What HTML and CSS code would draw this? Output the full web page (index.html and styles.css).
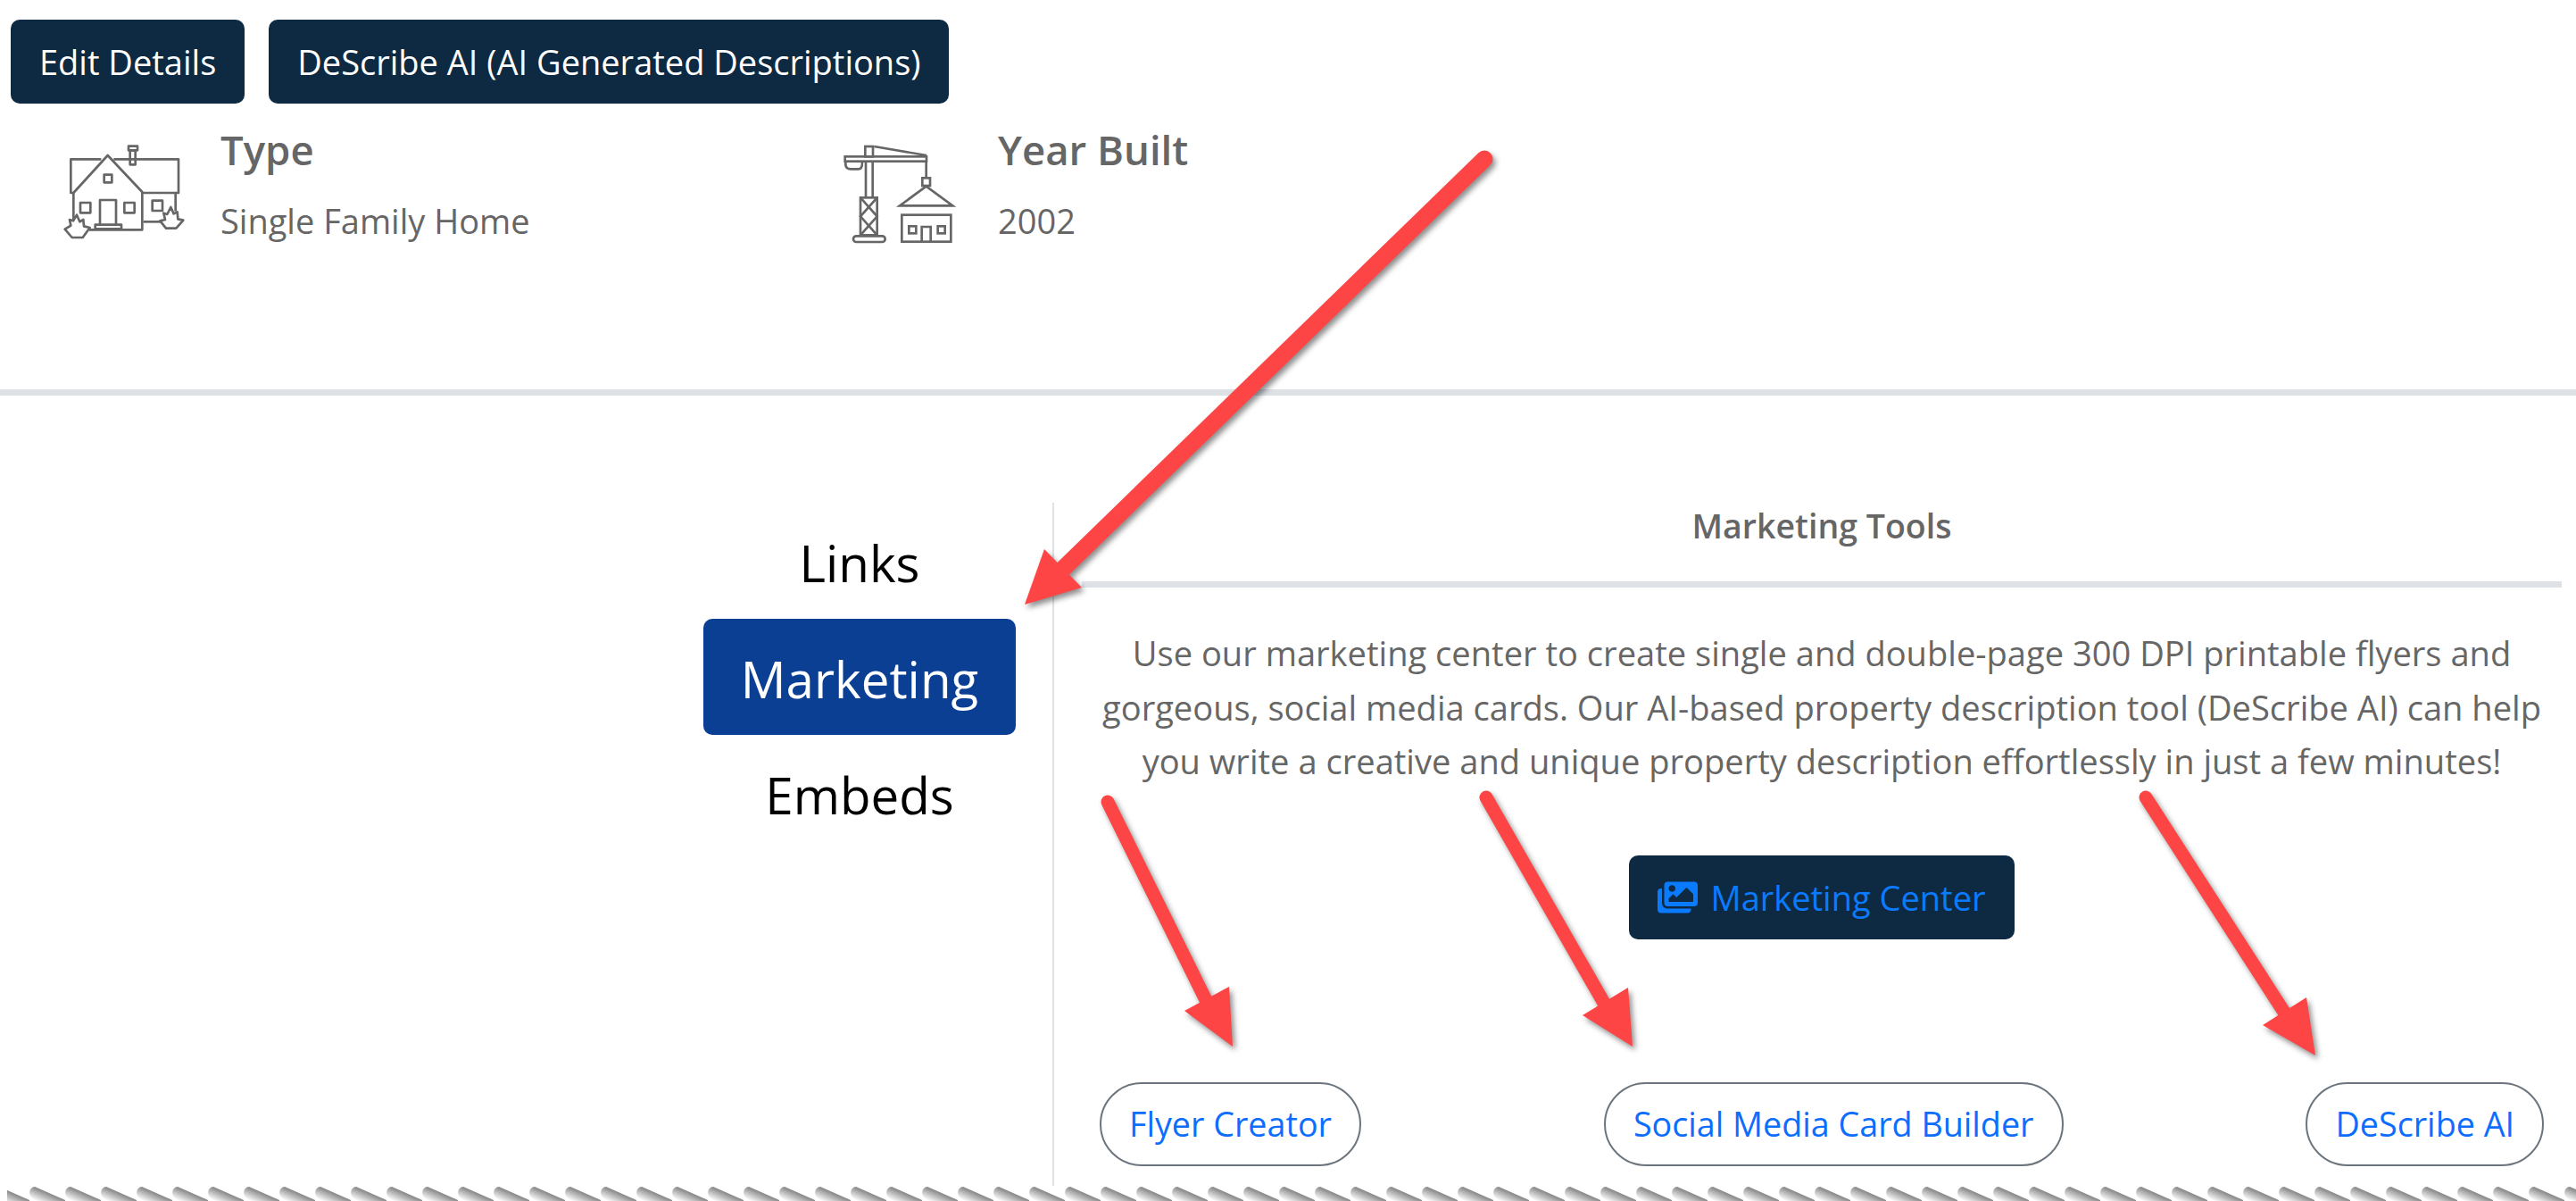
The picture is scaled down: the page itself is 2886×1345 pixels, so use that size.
FILE: index.html
```html
<!doctype html>
<html>
<head>
<meta charset="utf-8">
<title>Listing details</title>
<link rel="stylesheet" href="styles.css">
</head>

<body>
<div class="page">
    <div class="actions">
        <a class="btn">Edit Details</a>
        <a class="btn">DeScribe AI (AI Generated Descriptions)</a>
    </div>

    <div class="facts">
        <div class="fact">
            <svg class="fact-icon house" viewBox="0 0 540 420">
                <g fill="none" stroke="#666" stroke-width="8" stroke-linejoin="round">
                    <path d="M97 228 L88 228 V115 H190"/>
                    <path d="M232 115 H450 V228 H330"/>
                    <path d="M97 228 L212 102 L328 225 V352 H150"/>
                    <path d="M97 228 V330"/>
                    <path d="M440 228 V290"/>
                    <path d="M332 325 H395"/>
                    <path d="M287 133 V85 H305 V133 Z"/>
                    <rect x="282" y="71" width="30" height="14"/>
                    <rect x="200" y="167" width="26" height="26"/>
                    <rect x="120" y="261" width="34" height="34"/>
                    <rect x="268" y="261" width="34" height="34"/>
                    <rect x="362" y="254" width="34" height="34"/>
                    <path d="M186 335 V252 H240 V335"/>
                    <rect x="170" y="335" width="88" height="14"/>
                    <path fill="#fff" d="M68 350 L88 338 L84 318 L96 322 L108 302 L118 325 L130 318 L132 340 L152 345 L128 378 H92 Z"/>
                    <path fill="#fff" d="M388 322 L405 318 L400 296 L412 300 L424 276 L434 298 L446 292 L448 316 L466 320 L442 347 H408 Z"/>
                </g>
            </svg>
            <div>
                <div class="fact-label">Type</div>
                <div class="fact-value">Single Family Home</div>
            </div>
        </div>
        <div class="fact">
            <svg class="fact-icon crane" viewBox="0 0 513 420">
                <g fill="none" stroke="#666" stroke-width="8">
                    <rect x="50" y="76" width="274" height="16"/>
                    <path d="M52 95 C50 115 60 118 70 118 H95 C105 118 108 105 108 95"/>
                    <rect x="118" y="42" width="26" height="34"/>
                    <path d="M148 42 L324 72"/>
                    <path d="M120 92 V214"/>
                    <path d="M143 92 V214"/>
                    <rect x="102" y="214" width="56" height="126"/>
                    <path d="M102 214 L158 277 L102 340"/>
                    <path d="M158 214 L102 277 L158 340"/>
                    <rect x="78" y="343" width="107" height="20" rx="10"/>
                    <path d="M323 92 V148"/>
                    <rect x="310" y="148" width="26" height="26"/>
                    <path d="M323 176 L234 241 H412 Z"/>
                    <rect x="241" y="272" width="165" height="90"/>
                    <rect x="265" y="310" width="24" height="24"/>
                    <rect x="362" y="310" width="24" height="24"/>
                    <path d="M308 360 V312 H338 V360"/>
                </g>
            </svg>
            <div>
                <div class="fact-label">Year Built</div>
                <div class="fact-value">2002</div>
            </div>
        </div>
    </div>

    <div class="rule"></div>

    <div class="tools">
        <div class="tabs">
            <div class="tab">Links</div>
            <div class="tab active">Marketing</div>
            <div class="tab">Embeds</div>
        </div>
        <div class="panel">
            <div class="panel-title">Marketing Tools</div>
            <div class="panel-rule"></div>
            <p class="panel-text">Use our marketing center to create single and double-page 300 DPI printable flyers and gorgeous, social media cards. Our AI-based property description tool (DeScribe AI) can help you write a creative and unique property description effortlessly in just a few minutes!</p>
            <div class="center-row">
                <a class="btn btn-blue">
                    <svg class="btn-icon" viewBox="0 0 576 512"><path fill="#0a7bff" d="M480 416v16c0 26.51-21.49 48-48 48H48c-26.51 0-48-21.49-48-48V176c0-26.51 21.49-48 48-48h16v208c0 44.112 35.888 80 80 80h336zm96-80V80c0-26.51-21.49-48-48-48H144c-26.51 0-48 21.49-48 48v256c0 26.51 21.49 48 48 48h384c26.51 0 48-21.49 48-48zM256 128c0 26.51-21.49 48-48 48s-48-21.49-48-48 21.49-48 48-48 48 21.49 48 48zm-96 144l55.515-55.515c4.686-4.686 12.284-4.686 16.971 0L272 256l135.515-135.515c4.686-4.686 12.284-4.686 16.971 0L512 208v112H160v-48z"/></svg>
                    Marketing Center
                </a>
            </div>
            <div class="pills">
                <a class="pill">Flyer Creator</a>
                <a class="pill">Social Media Card Builder</a>
                <a class="pill">DeScribe AI</a>
            </div>
        </div>
    </div>

    <svg class="wave" width="100%" height="17">
        <defs>
            <linearGradient id="toothfill" gradientUnits="userSpaceOnUse" x1="6" y1="1" x2="-1" y2="17">
                <stop offset="0" stop-color="#858585"/>
                <stop offset="0.8" stop-color="#fff"/>
            </linearGradient>
            <pattern id="tooth" x="-7" y="0" width="40" height="17" patternUnits="userSpaceOnUse">
                <path fill="url(#toothfill)" d="M0 8 C0 4 3 1 6 1 L40 16 V17 H7 C3 14 0 11 0 8 Z"/>
            </pattern>
        </defs>
        <rect width="100%" height="17" fill="url(#tooth)"/>
        <rect width="8" height="17" fill="#fff"/>
    </svg>

    <!-- annotation arrows drawn on top of the screenshot -->
    <svg class="arrows" width="2886" height="1345">
        <g fill="#fe4545" stroke="#fe4545" stroke-linecap="round">
            <line x1="1663" y1="178" x2="1192" y2="636" stroke-width="19"/>
            <polygon points="1148,677 1170,615 1212,658" stroke="none"/>
            <line x1="1241" y1="898" x2="1352" y2="1122" stroke-width="15"/>
            <polygon points="1381,1172 1377,1105 1327,1132" stroke="none"/>
            <line x1="1665" y1="893" x2="1798" y2="1125" stroke-width="15"/>
            <polygon points="1829,1172 1824,1106 1773,1137" stroke="none"/>
            <line x1="2404" y1="893" x2="2560" y2="1135" stroke-width="15"/>
            <polygon points="2594,1182 2584,1117 2535,1148" stroke="none"/>
        </g>
    </svg>
</div>
</body>
</html>
```

FILE: styles.css
```css
html,body { padding:0; margin:0; background:#fff;}
body { font-family:"Open Sans","Noto Sans",sans-serif; color:#666;}
.page { position:relative; height:1345px; overflow:hidden; display:flex; flex-direction:column;}

.actions { display:flex; gap:27px; padding:22px 12px 0; flex:none;}
.btn { display:inline-block; background:#0d2a42; color:#fff; font-size:38px; line-height:54px; padding:20px 32px; border-radius:10px;}
.btn-blue { display:inline-flex; align-items:center; gap:14px; color:#0a7bff;}
.btn-icon { width:45px; height:40px;}

.facts { display:grid; grid-template-columns:870px 1fr; padding:24px 0 0 50px; height:320px; box-sizing:border-box; flex:none;}
.fact { display:flex; gap:17px;}
.fact-icon { height:140px; flex:none;}
.house { width:180px;}
.crane { width:171px; margin-left:10px; margin-top:10px;}
.fact-label { font-size:45.5px; font-weight:600; line-height:64px; margin-top:-5px;}
.fact-value { font-size:38px; line-height:60px; margin-top:18px;}

.rule { height:7px; background:#dee2e6; flex:none;}

.tools { display:flex; flex:1; padding-top:120px; min-height:0;}
.tabs { width:350px; padding-left:788px; padding-right:41px; flex:none;}
.tab { height:130px; line-height:135px; text-align:center; font-size:56.5px; color:#000; border-radius:10px;}
.tab.active { background:#0a3f94; color:#fff;}

.panel { flex:1; border-left:2px solid #dee2e6; padding:0 16px 0 31px; min-width:0;}
.panel-title { height:88px; line-height:52px; text-align:center; font-size:37.5px; font-weight:600;}
.panel-rule { height:7px; background:#dee2e6;}
.panel-text { margin:43px 0 0; font-size:38.1px; line-height:60.5px; text-align:center;}
.center-row { display:flex; justify-content:center; margin-top:75px;}
.pills { display:flex; justify-content:space-between; padding:0 20px; margin-top:160px;}
.pill { border:2px solid #6c757d; border-radius:47px; color:#0d6efd; font-size:37.7px; line-height:54px; padding:18px 31px;}

.wave { display:block; flex:none;}
.arrows { position:absolute; left:0; top:0; pointer-events:none; filter:drop-shadow(3px 4px 3px rgba(0,0,0,0.45));}
```
